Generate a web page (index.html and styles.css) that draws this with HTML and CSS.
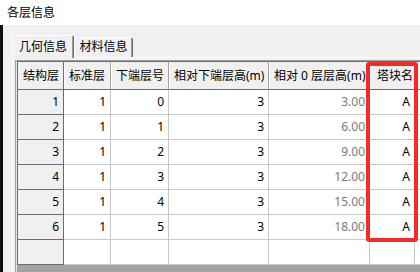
FILE: index.html
```html
<!DOCTYPE html>
<html lang="zh-CN">
<head>
<meta charset="utf-8">
<title>各层信息</title>
<link rel="stylesheet" href="styles.css">
</head>
<body>
<div class="title">各层信息</div>
<div class="main">
  <div class="edge"></div>
  <div class="content">
    <div class="tabs">
      <div class="tab active">几何信息</div>
      <div class="tab">材料信息</div>
    </div>
    <div class="panel">
      <div class="grid">
        <div class="row head">
          <div class="c c1">结构层</div>
          <div class="c c2">标准层</div>
          <div class="c c3">下端层号</div>
          <div class="c c4">相对下端层高(m)</div>
          <div class="c c5">相对 0 层层高(m)</div>
          <div class="c c6">塔块名</div>
          <div class="c c7"></div>
        </div>
        <div class="row"><div class="c c1">1</div><div class="c c2">1</div><div class="c c3">0</div><div class="c c4">3</div><div class="c c5 ro">3.00</div><div class="c c6">A</div><div class="c c7"></div></div>
        <div class="row"><div class="c c1">2</div><div class="c c2">1</div><div class="c c3">1</div><div class="c c4">3</div><div class="c c5 ro">6.00</div><div class="c c6">A</div><div class="c c7"></div></div>
        <div class="row"><div class="c c1">3</div><div class="c c2">1</div><div class="c c3">2</div><div class="c c4">3</div><div class="c c5 ro">9.00</div><div class="c c6">A</div><div class="c c7"></div></div>
        <div class="row"><div class="c c1">4</div><div class="c c2">1</div><div class="c c3">3</div><div class="c c4">3</div><div class="c c5 ro">12.00</div><div class="c c6">A</div><div class="c c7"></div></div>
        <div class="row"><div class="c c1">5</div><div class="c c2">1</div><div class="c c3">4</div><div class="c c4">3</div><div class="c c5 ro">15.00</div><div class="c c6">A</div><div class="c c7"></div></div>
        <div class="row"><div class="c c1">6</div><div class="c c2">1</div><div class="c c3">5</div><div class="c c4">3</div><div class="c c5 ro">18.00</div><div class="c c6">A</div><div class="c c7"></div></div>
        <div class="row"><div class="c c1"></div><div class="c c2"></div><div class="c c3"></div><div class="c c4"></div><div class="c c5"></div><div class="c c6"></div><div class="c c7"></div></div>
      </div>
    </div>
  </div>
</div>
<div class="highlight"></div>
</body>
</html>
```
FILE: styles.css
```css
html, body {
  margin: 0;
  padding: 0;
}
body {
  width: 420px;
  height: 272px;
  overflow: hidden;
  background: #f0f0f0;
  font-family: "Noto Sans", "Noto Sans CJK SC", sans-serif;
  font-size: 12px;
  color: #000;
  position: relative;
}
.title {
  height: 25px;
  line-height: 25px;
  padding-left: 7px;
  background: #fff;
}
.main {
  display: flex;
  height: 247px;
}
.edge {
  width: 3px;
  background: #111;
  flex: none;
}
.content {
  flex: 1;
  padding: 10px 0 0 9px;
  overflow: hidden;
}
.tabs {
  display: flex;
  align-items: flex-end;
  height: 22px;
}
.tab {
  box-sizing: border-box;
  height: 20px;
  width: 59px;
  line-height: 18px;
  text-align: center;
  border-top: 1px solid #fff;
  border-left: 1px solid #fff;
  border-right: 1px solid #696969;
  box-shadow: inset -1px 0 #a0a0a0;
  border-radius: 2px 2px 0 0;
  background: #f0f0f0;
}
.tab.active {
  width: 62px;
  height: 23px;
  line-height: 22px;
  margin-bottom: -1px;
  position: relative;
  z-index: 1;
}
.panel {
  border-top: 1px solid #fff;
  border-left: 1px solid #fff;
  padding: 2px 0 0 2px;
  height: 220px;
}
.grid {
  border-top: 1px solid #a0a0a0;
  border-left: 1px solid #a0a0a0;
  box-shadow: inset 1px 0 #e6e6e6;
  padding-left: 1px;
  background: #a3a3a3;
  height: 230px;
}
.row {
  display: flex;
  height: 25px;
}
.c {
  box-sizing: border-box;
  flex: none;
  height: 100%;
  background: #fff;
  border-right: 1px solid #c8c8c8;
  border-bottom: 1px solid #c8c8c8;
  text-align: right;
  padding-right: 4px;
  line-height: 24px;
  white-space: nowrap;
  overflow: hidden;
}
.c1 { width: 47px; border-left: 1px solid #6d6d6d; background: #f0f0f0; border-right-color: #6d6d6d; border-bottom-color: #6d6d6d; }
.c2 { width: 47px; }
.c3 { width: 58px; }
.c4 { width: 100px; }
.c5 { width: 101px; }
.c6 { width: 45px; }
.c7 { width: 60px; }
.ro { color: #7a7a7a; }

.row.head {
  height: 29px;
}
.head .c {
  background: #f0f0f0;
  text-align: left;
  padding: 0 0 0 5px;
  line-height: 27px;
  border-top: 1px solid #6d6d6d;
  border-bottom: 1px solid #6d6d6d;
  border-right: 1px solid #a0a0a0;
  box-shadow: inset 1px 0 #fff;
}
.head .c1 {
  border-right-color: #6d6d6d;
  box-shadow: none;
}
.head .c6 {
  padding-left: 7px;
}

.highlight {
  position: absolute;
  left: 366px;
  top: 62px;
  width: 44px;
  height: 172px;
  border: 4px solid #f42a2a;
  border-radius: 3px;
}
```
